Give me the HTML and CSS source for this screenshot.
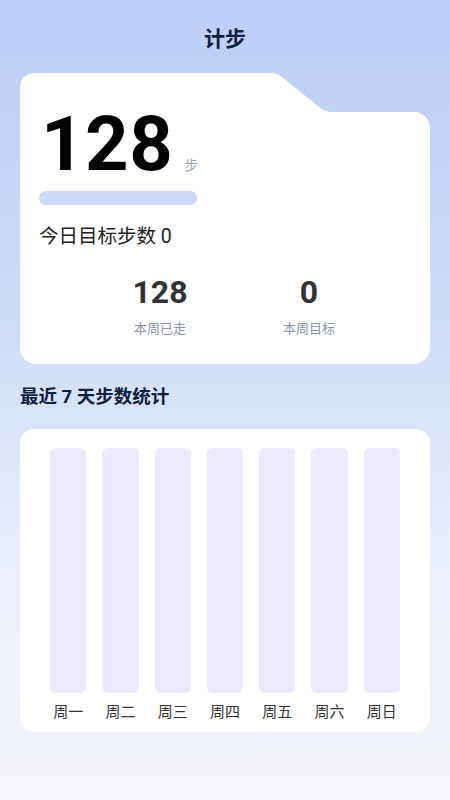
FILE: index.html
```html
<!DOCTYPE html>
<html lang="zh-CN">
	<head>
		<meta charset="UTF-8" />
		<meta name="viewport" content="width=device-width, initial-scale=1.0" />
		<title>计步</title>
		<link rel="stylesheet" href="styles.css">
	</head>

	<body>
		<div class="page">
			<h1 class="title">计步</h1>

			<div class="card">
				<div class="today">
					<span class="today-num">128</span>
					<span class="today-unit">步</span>
				</div>
				<div class="progress"></div>
				<div class="goal">今日目标步数 0</div>
				<div class="stats">
					<div class="stat">
						<span class="stat-num">128</span>
						<span class="stat-label">本周已走</span>
					</div>
					<div class="stat">
						<span class="stat-num">0</span>
						<span class="stat-label">本周目标</span>
					</div>
				</div>
			</div>

			<h2 class="section-title">最近 7 天步数统计</h2>

			<div class="chart">
				<div class="day"><div class="bar"></div><span>周一</span></div>
				<div class="day"><div class="bar"></div><span>周二</span></div>
				<div class="day"><div class="bar"></div><span>周三</span></div>
				<div class="day"><div class="bar"></div><span>周四</span></div>
				<div class="day"><div class="bar"></div><span>周五</span></div>
				<div class="day"><div class="bar"></div><span>周六</span></div>
				<div class="day"><div class="bar"></div><span>周日</span></div>
			</div>
		</div>
	</body>
</html>
```

FILE: styles.css
```css
html,
body {
	margin: 0;
	height: 100%;
}

body {
	font-family: Roboto, "Noto Sans CJK SC", sans-serif;
	background: linear-gradient(180deg, #bccef5 0%, #cfdcf7 40%, #e9eefb 70%, #f5f6fb 100%);
	color: #222;
}

.page {
	padding: 0 20px;
}

.title {
	margin: 0;
	padding-top: 24px;
	height: 48px;
	text-align: center;
	font-size: 21px;
	font-weight: 700;
	color: #10203f;
	line-height: 30px;
	box-sizing: border-box;
}

.card {
	position: relative;
	display: flow-root;
	margin-top: 64px;
	background: #fff;
	border-radius: 0 16px 16px 16px;
	padding: 0 19px 26px;
}

/* folder tab on top of the card */
.card::before {
	content: '';
	position: absolute;
	left: 0;
	top: -39px;
	width: 320px;
	height: 40px;
	background: #fff;
	clip-path: path('M0,40 L0,16 Q0,0 16,0 L252,0 Q257,0 262,4 L299,34 Q305,39 312,39 L320,39 L320,40 Z');
}

.today {
	position: relative;
	display: flex;
	align-items: baseline;
	gap: 11px;
	margin-top: -12px;
	height: 88px;
}

.today-num {
	font-size: 76px;
	font-weight: 700;
	color: #000;
	line-height: 88px;
	margin-left: 2px;
	letter-spacing: 0.5px;
}

.today-unit {
	font-size: 14px;
	color: #9aa3b0;
}

.progress {
	margin-top: 3px;
	width: 158px;
	height: 14px;
	border-radius: 7px;
	background: #cddbf9;
}

.goal {
	margin-top: 19px;
	font-size: 19.5px;
	color: #222;
	line-height: 26px;
}

.stats {
	display: flex;
	justify-content: center;
	margin-top: 24px;
	padding-left: 19px;
}

.stat {
	width: 149px;
	display: flex;
	flex-direction: column;
	align-items: center;
}

.stat-num {
	font-size: 32px;
	font-weight: 700;
	color: #333;
	line-height: 36px;
}

.stat-label {
	margin-top: 10px;
	font-size: 13px;
	color: #8a94a6;
	line-height: 18px;
}

.section-title {
	margin: 21px 0 0;
	font-size: 18.5px;
	font-weight: 700;
	color: #10203f;
	line-height: 24px;
}

.chart {
	margin-top: 20px;
	background: #fff;
	border-radius: 14px;
	padding: 19px 30px 9px;
	display: grid;
	grid-template-columns: repeat(7, 1fr);
	column-gap: 16px;
}

.day {
	display: flex;
	flex-direction: column;
	align-items: center;
}

.bar {
	width: 100%;
	height: 245px;
	border-radius: 6px;
	background: #ebe9fd;
}

.day span {
	margin-top: 8px;
	font-size: 15px;
	color: #333;
	line-height: 22px;
}
```
